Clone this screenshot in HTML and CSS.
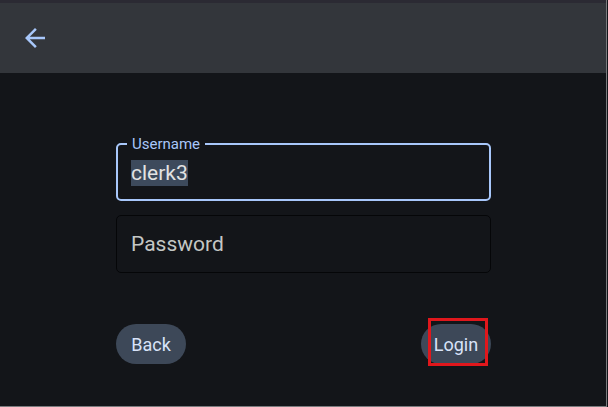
FILE: index.html
```html
<!DOCTYPE html>
<html>
<head>
<meta charset="utf-8">
<link rel="stylesheet" href="styles.css">
</head>
<body>
<div class="app">
  <header class="topbar">
    <button class="icon-btn" aria-label="Back">
      <svg width="30" height="30" viewBox="0 0 24 24"><path d="M20 11H7.83l5.59-5.59L12 4l-8 8 8 8 1.41-1.41L7.83 13H20v-2z" fill="#a8c7fa"/></svg>
    </button>
  </header>
  <main class="content">
    <form class="login-form">
      <div class="field field-focused">
        <span class="field-label">Username</span>
        <span class="field-value"><span class="selected">clerk3</span></span>
      </div>
      <div class="field">
        <span class="field-placeholder">Password</span>
      </div>
      <div class="actions">
        <button type="button" class="pill">Back</button>
        <span class="login-wrap">
          <button type="button" class="pill">Login</button>
          <span class="highlight-box"></span>
        </span>
      </div>
    </form>
  </main>
</div>
</body>
</html>
```
FILE: styles.css
```css
html, body {
  margin: 0;
  padding: 0;
  background: #131519;
}
body {
  font-family: Roboto, "Noto Sans", sans-serif;
  width: 608px;
  height: 407px;
  overflow: hidden;
}
.app {
  width: 606px;
  height: 406px;
  border-right: 1px solid #7a7b7e;
  border-bottom: 1px solid #7a7b7e;
  display: flex;
  flex-direction: column;
  background: #131519;
}
.topbar {
  height: 70px;
  border-top: 3px solid #2b2a33;
  background: #33363b;
  display: flex;
  align-items: center;
  padding-left: 20px;
  flex-shrink: 0;
}
.icon-btn {
  background: none;
  border: 0;
  padding: 0;
  width: 30px;
  height: 30px;
  display: flex;
}
.content {
  padding-top: 70px;
  padding-left: 116px;
}
.login-form {
  width: 375px;
  display: flex;
  flex-direction: column;
  gap: 14px;
}
.field {
  position: relative;
  height: 56px;
  border: 1px solid #050608;
  border-radius: 5px;
  display: flex;
  align-items: center;
  padding-left: 14px;
  padding-right: 14px;
}
.field-focused {
  height: 54px;
  border: 2px solid #a8c7fa;
  padding-left: 13px;
}
.field-label {
  position: absolute;
  left: 9px;
  top: -10px;
  padding: 0 5px;
  background: #131519;
  color: #a8c7fa;
  font-size: 15px;
  line-height: 18px;
}
.field-value {
  font-size: 21px;
  color: #e3e3e3;
  margin-top: 2px;
}
.selected {
  display: inline-block;
  background: #3d4a5c;
  line-height: 26px;
}
.field-placeholder {
  font-size: 21px;
  color: #c4c7c5;
}
.actions {
  margin-top: 37px;
  display: flex;
  justify-content: space-between;
  align-items: center;
}
.pill {
  width: 70px;
  height: 40px;
  padding: 0;
  border: 0;
  border-radius: 20px;
  background: #3d4858;
  color: #d8e3f8;
  font-family: Roboto, "Noto Sans", sans-serif;
  font-size: 18px;
  display: flex;
  align-items: center;
  justify-content: center;
}
.login-wrap {
  position: relative;
  display: flex;
}
.highlight-box {
  position: absolute;
  left: 7px;
  top: -6px;
  width: 54px;
  height: 42px;
  border: 3px solid #e0171c;
}
```
